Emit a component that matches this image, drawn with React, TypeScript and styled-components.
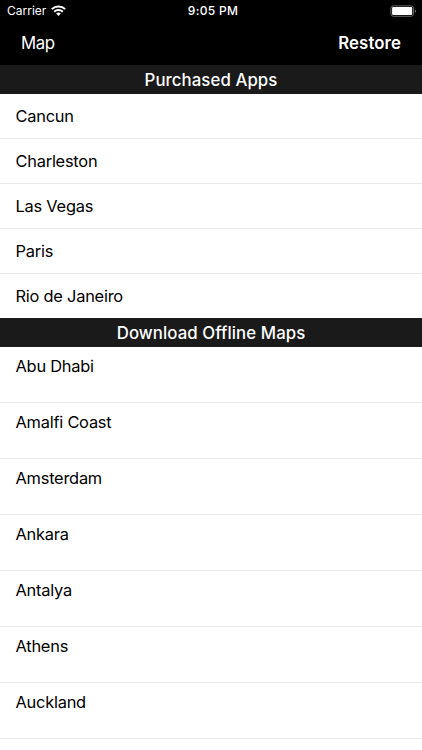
import React from "react";
import styled, { createGlobalStyle } from "styled-components";

const Global = createGlobalStyle`
  html, body { margin: 0; padding: 0; background: #fff; overflow: hidden; }
  * { box-sizing: border-box; }
`;
const Screen = styled.main`
  width: 422px; height: 750px; overflow: hidden;
  display: flex; flex-direction: column;
  background: #fff; color: #000;
  font-family: Inter, "Liberation Sans", sans-serif;
  font-size: 16.4px; letter-spacing: -0.23px;
`;
const StatusBar = styled.header`
  flex: none; height: 22px; padding: 0 5px 0 7px;
  display: grid; grid-template-columns: 1fr auto 1fr; align-items: center;
  background: #000; color: #fff; font-size: 12px; letter-spacing: 0;
`;
const Carrier = styled.div`
  display: flex; align-items: center; gap: 5px; line-height: 20px; padding-bottom: 1px;
`;
const Clock = styled.div`
  font-weight: 500; letter-spacing: 0.3px; line-height: 20px; padding-left: 2px; padding-bottom: 1px;
`;
const Battery = styled.svg`
  justify-self: end; margin-bottom: 1px;
`;
const NavBar = styled.nav`
  flex: none; height: 43px; padding: 0 21px 1px;
  display: flex; align-items: center; justify-content: space-between;
  background: #000; color: #fff;
`;
const NavButton = styled.button<{ $bold?: boolean }>`
  border: 0; padding: 0; background: none; color: inherit;
  font: inherit; font-size: 16.8px; line-height: 20px;
  font-weight: ${(p) => (p.$bold ? 600 : 400)};
  letter-spacing: ${(p) => (p.$bold ? "0.1px" : "-0.4px")};
`;
const SectionTitle = styled.h2`
  flex: none; height: 29px; margin: 0; padding-top: 1px;
  display: flex; align-items: center; justify-content: center;
  background: #1a1a1a; color: #fff; font-size: 16.8px; font-weight: 500; letter-spacing: 0.08px;
`;
const List = styled.ul`
  flex: none; margin: 0; padding: 0; list-style: none;
`;
const Row = styled.li<{ $height: number; $pad: number }>`
  height: ${(p) => p.$height}px; padding: ${(p) => p.$pad}px 15.5px 0;
  line-height: 20px; border-bottom: 1px solid #e8e8ea;
  &:last-child { border-bottom-color: ${(p) => (p.$height < 50 ? "#fff" : "#e8e8ea")}; }
`;

const purchased = ["Cancun", "Charleston", "Las Vegas", "Paris", "Rio de Janeiro"];
const purchasedHeights = [45, 45, 45, 45, 44];
const offline = ["Abu Dhabi", "Amalfi Coast", "Amsterdam", "Ankara", "Antalya", "Athens", "Auckland", ""];

export default function App() {
  return (
    <Screen>
      <Global />
      <StatusBar>
        <Carrier>
          <span>Carrier</span>
          <svg width="15" height="11" viewBox="0 0 15 11" fill="none" stroke="#fff" strokeWidth="2">
            <path d="M.8 4.1a9.6 9.6 0 0 1 13.4 0M3.2 6.7a6.1 6.1 0 0 1 8.6 0" />
            <path d="M7.5 11 5.1 8.6a3.4 3.4 0 0 1 4.8 0Z" fill="#fff" stroke="none" />
          </svg>
        </Carrier>
        <Clock>9:05 PM</Clock>
        <Battery width="27" height="12" viewBox="0 0 27 12">
          <rect x=".9" y=".9" width="22.6" height="10.4" rx="2.4" fill="none" stroke="#666" />
          <rect x="2.1" y="2.1" width="20.1" height="8" rx="1" fill="#fff" />
          <path d="M24.8 4.2v3.8q1.4-.5 1.4-1.9t-1.4-1.9" fill="#666" />
        </Battery>
      </StatusBar>
      <NavBar>
        <NavButton>Map</NavButton>
        <NavButton $bold>Restore</NavButton>
      </NavBar>
      <SectionTitle>Purchased Apps</SectionTitle>
      <List>
        {purchased.map((name, i) => <Row key={name} $height={purchasedHeights[i]} $pad={12.4}>{name}</Row>)}
      </List>
      <SectionTitle>Download Offline Maps</SectionTitle>
      <List>
        {offline.map((name) => <Row key={name} $height={56} $pad={9}>{name}</Row>)}
      </List>
    </Screen>
  );
}
